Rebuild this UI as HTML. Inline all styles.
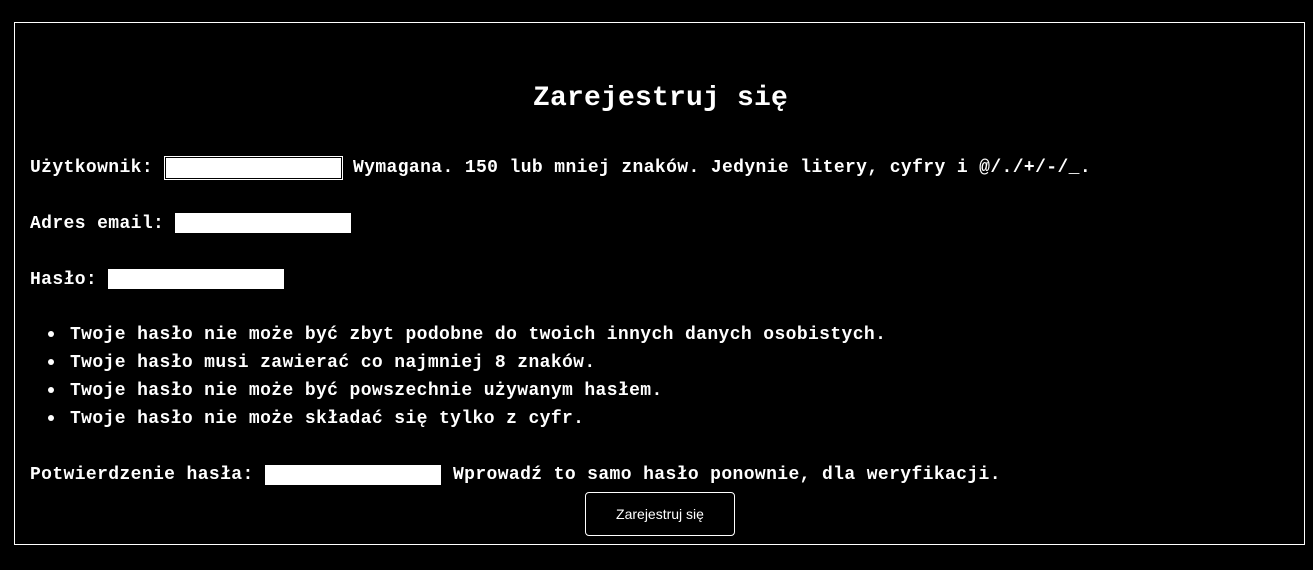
<!DOCTYPE html>
<html><head><meta charset="utf-8"><style>
body{margin:0;background:#000;width:1313px;height:570px;position:relative;overflow:hidden;font-family:"Liberation Mono",monospace;font-weight:bold;color:#fff;font-size:18px;letter-spacing:0.38px}
.box{position:absolute;left:14px;top:22px;width:1289px;height:521px;border:1px solid #fff}
.t{position:absolute;white-space:pre;line-height:20px}
.in{position:absolute;background:#fff;height:20px;width:176px}
h1{position:absolute;left:4px;width:1313px;text-align:center;top:81px;margin:0;font-size:28px;line-height:36px;letter-spacing:0.2px}
.btn{position:absolute;left:585px;top:492px;width:148px;height:42px;border:1px solid #fff;border-radius:4px;font-family:"Liberation Sans",sans-serif;font-weight:normal;font-size:14px;letter-spacing:0;text-align:center;line-height:42px}
.dot{position:absolute;width:6px;height:6px;border-radius:50%;background:#fff}
</style></head><body>
<div class="box"></div>
<h1>Zarejestruj się</h1>
<div class="t" style="left:30px;top:158px">Użytkownik:</div>
<div class="in" style="border:1px solid #fff;outline:1px solid #000;box-shadow:0 0 0 2px #fff;left:166px;top:158px;width:173px;height:18px"></div>
<div class="t" style="left:353px;top:158px">Wymagana. 150 lub mniej znaków. Jedynie litery, cyfry i @/./+/-/_.</div>
<div class="t" style="left:30px;top:214px">Adres email:</div>
<div class="in" style="left:175px;top:213px"></div>
<div class="t" style="left:30px;top:270px">Hasło:</div>
<div class="in" style="left:108px;top:269px"></div>
<div class="dot" style="left:48px;top:331px"></div>
<div class="dot" style="left:48px;top:359px"></div>
<div class="dot" style="left:48px;top:387px"></div>
<div class="dot" style="left:48px;top:415px"></div>
<div class="t" style="left:70px;top:325px">Twoje hasło nie może być zbyt podobne do twoich innych danych osobistych.</div>
<div class="t" style="left:70px;top:353px">Twoje hasło musi zawierać co najmniej 8 znaków.</div>
<div class="t" style="left:70px;top:381px">Twoje hasło nie może być powszechnie używanym hasłem.</div>
<div class="t" style="left:70px;top:409px">Twoje hasło nie może składać się tylko z cyfr.</div>
<div class="t" style="left:30px;top:465px">Potwierdzenie hasła:</div>
<div class="in" style="left:265px;top:465px"></div>
<div class="t" style="left:453px;top:465px">Wprowadź to samo hasło ponownie, dla weryfikacji.</div>
<div class="btn">Zarejestruj się</div>
</body></html>
